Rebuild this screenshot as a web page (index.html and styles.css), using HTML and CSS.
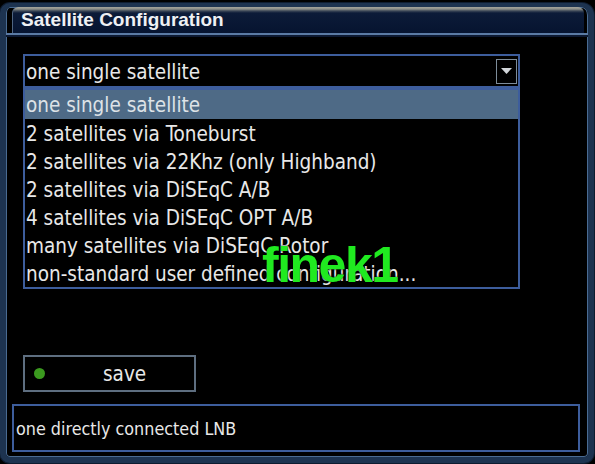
FILE: index.html
```html
<!DOCTYPE html>
<html>
<head>
<meta charset="utf-8">
<title>Satellite Configuration</title>
<link rel="stylesheet" href="styles.css">
</head>
<body>
<div class="window">
  <div class="titlebar"><span class="title">Satellite Configuration</span></div>
  <div class="divider"></div>
  <div class="content">
    <div class="combo">
      <span class="combo-value">one single satellite</span>
      <span class="arrow-btn"><svg width="11" height="7" viewBox="0 0 11 7"><polygon points="0,0 11,0 5.5,6" fill="#d2d6da"/></svg></span>
    </div>
    <ul class="list">
      <li class="sel">one single satellite</li>
      <li>2 satellites via Toneburst</li>
      <li>2 satellites via 22Khz (only Highband)</li>
      <li>2 satellites via DiSEqC A/B</li>
      <li>4 satellites via DiSEqC OPT A/B</li>
      <li>many satellites via DiSEqC Rotor</li>
      <li>non-standard user defined configuration...</li>
    </ul>
    <div class="save-btn"><span class="dot"></span><span class="save-label">save</span></div>
    <div class="info">one directly connected LNB</div>
  </div>
  <div class="watermark">finek1</div>
</div>
</body>
</html>
```
FILE: styles.css
```css
* { box-sizing: border-box; }
html, body { margin: 0; padding: 0; background: #000; }
body {
  width: 595px;
  height: 464px;
  overflow: hidden;
  font-family: "DejaVu Sans Condensed", "DejaVu Sans", "Liberation Sans", sans-serif;
  font-stretch: condensed;
  color: #e8e8e8;
}
.window {
  position: relative;
  margin-top: 3px;
  width: 594px;
  height: 460px;
  border: 6px solid #1d3350;
  border-top-width: 4px;
  border-radius: 10px 12px 10px 10px;
  box-shadow: inset 0 0 0 1px #4a6b92, 0 0 0 1px #0e1c30;
  background: #000;
  display: flex;
  flex-direction: column;
}
.titlebar {
  flex: none;
  height: 26px;
  margin: 0 4px 0 6px;
  padding-left: 8px;
  border-radius: 6px 6px 0 0;
  border-left: 1px solid #4f6582;
  background: linear-gradient(to bottom, #a4a49c 0, #8e908a 2px, #3a4656 4px, #0c1b38 6px, #061430 100%);
}
.title {
  font-family: "Liberation Sans", Arial, sans-serif;
  font-stretch: normal;
  font-weight: bold;
  font-size: 19px;
  line-height: 26px;
  color: #eef0f3;
}
.divider {
  flex: none;
  height: 4px;
  background: linear-gradient(to bottom, #5a7aa4 0, #5a7aa4 2px, #0c1830 2px, #0c1830 4px);
}
.content {
  flex: 1;
  padding-top: 17px;
  display: flex;
  flex-direction: column;
}
.combo {
  margin-left: 17px;
  width: 497px;
  height: 34px;
  border: 2px solid #3d5d9c;
  padding: 0 1px;
  display: flex;
  align-items: center;
  justify-content: space-between;
  font-size: 20.5px;
}
.combo-value { padding-top: 1px; }
.arrow-btn {
  width: 21px;
  height: 25px;
  border: 1px solid #7d8c9a;
  display: flex;
  align-items: center;
  justify-content: center;
}
.list {
  margin: 0 0 0 17px;
  padding: 0 0 1px;
  list-style: none;
  width: 497px;
  border: 2px solid #3d5d9c;
}
.list li {
  height: 28px;
  padding-top: 2px;
  line-height: 26px;
  padding-left: 1px;
  white-space: nowrap;
  font-size: 20.5px;
}
.list li.sel {
  height: 29px;
  background: #4e6a86;
  color: #dde2e7;
}
.list li:last-child { height: 27px; }
.save-btn {
  margin: 66px 0 0 17px;
  width: 173px;
  height: 37px;
  border: 2px solid #5e6e80;
  display: flex;
  align-items: center;
  font-size: 20.5px;
}
.dot {
  width: 11px;
  height: 11px;
  border-radius: 50%;
  background: #3b9a1f;
  margin-left: 9px;
}
.save-label { margin-left: 58px; }
.info {
  margin: 12px 0 0 6px;
  width: 568px;
  height: 48px;
  border: 2px solid #3d5d9c;
  padding-left: 2px;
  display: flex;
  align-items: center;
  font-size: 17.8px;
}
.watermark {
  position: absolute;
  left: 256px;
  top: 233px;
  font-family: "Liberation Sans", Arial, sans-serif;
  font-stretch: normal;
  font-weight: bold;
  font-size: 50px;
  line-height: 50px;
  letter-spacing: -1.5px;
  color: #20ea20;
  text-shadow: 0 0 2px #000;
}
```
